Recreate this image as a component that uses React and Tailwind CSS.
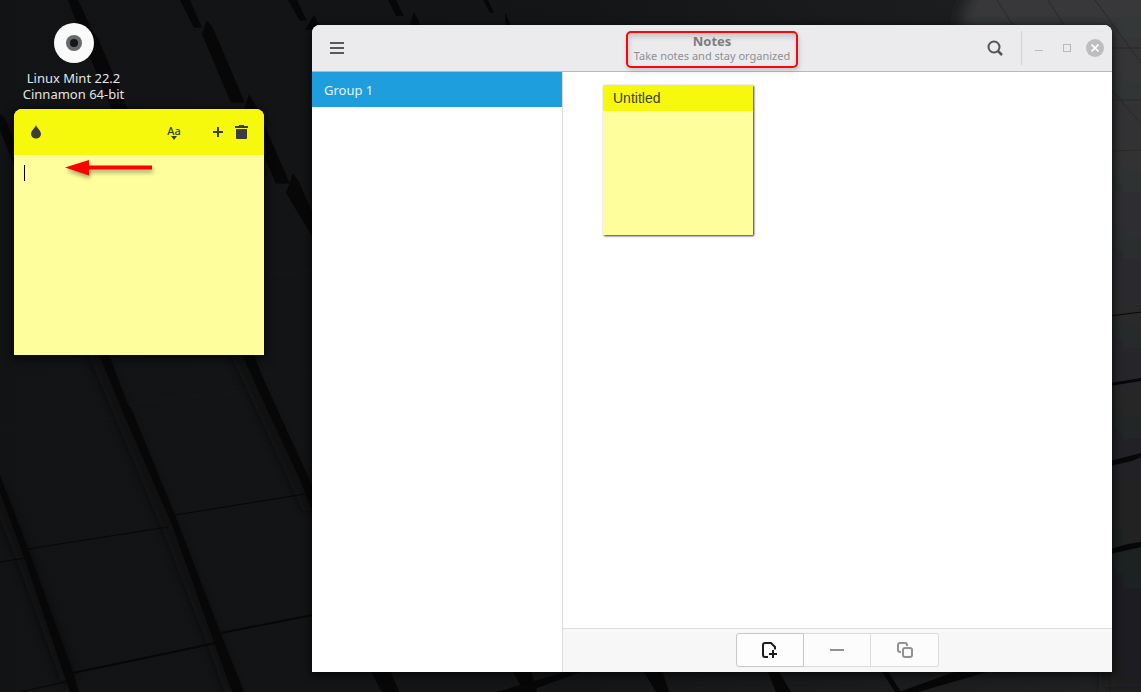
import React from "react";

function Wallpaper() {
  return (
    <svg
      aria-hidden="true"
      className="absolute inset-0 h-full w-full"
      viewBox="0 0 1141 692"
      preserveAspectRatio="xMidYMid slice"
    >
      <defs>
        <linearGradient id="base" x1="0" y1="0" x2="1" y2="0">
          <stop offset="0" stopColor="#121315" />
          <stop offset="0.5" stopColor="#141517" />
          <stop offset="1" stopColor="#202123" />
        </linearGradient>
        <linearGradient id="side" x1="0" y1="0" x2="0" y2="1">
          <stop offset="0" stopColor="#38393b" />
          <stop offset="0.4" stopColor="#2b2c2e" />
          <stop offset="0.75" stopColor="#202123" />
          <stop offset="1" stopColor="#1c1d1f" />
        </linearGradient>
        <filter id="soft" x="-20%" y="-20%" width="140%" height="140%">
          <feGaussianBlur stdDeviation="4" />
        </filter>
        <filter id="wide" x="-20%" y="-20%" width="140%" height="140%">
          <feGaussianBlur stdDeviation="7" />
        </filter>
      </defs>
      <rect width="1141" height="692" fill="url(#base)" />
      <path d="M984 -20C960 0 960 20 960 60H1105V692H1160V-20Z" fill="url(#side)" filter="url(#wide)" />

      <g fill="none" stroke="#0a0b0c" strokeWidth="14" opacity="0.6" filter="url(#soft)">
        <path d="M94 350L128 430L170 530L214 642L232 692" />
        <path d="M236 350L262 405L310 510" />
        <path d="M-4 490L24 560L68 680" />
      </g>
      <g fill="#070708">
        <path d="M68 0H78L92 30L98 38L127 107L135 120H116L85 45Z" />
        <path d="M180 0H190L202 28H194Z" />
        <path d="M207 20L213 28L245 103H231L202 34Z" />
        <path d="M249 94L257 108L290 184H276L244 109Z" />
        <path d="M293 173L299 182L330 254L312 236L286 193Z" />
        <path d="M288 0H297L307 21H300Z" />
        <path d="M314 15L322 30H305Z" />
        <path d="M388 0H396L404 16H396Z" />
        <path d="M414 12L422 28H409Z" />
        <path d="M483 0H488L494 13H490Z" />
        <path d="M505 12L512 28H506Z" />
        <path d="M0 114L5 118L14 140V165L0 130Z" />
        <path d="M97 350H107L128 405L131 408L175 515L220 632L244 692H232L215 645L172 525L124 415Z" />
        <path d="M240 350H252L263 378L330 525L312 510L300 480L258 390Z" />
        <path d="M-1 472L28 549L73 672L79 692H70L25 560L-1 490Z" />
        <path d="M370 670H390L399 692H382Z" />
        <path d="M512 670H531L537 692H524Z" />
        <path d="M496 692L572 670H586L526 692Z" />
        <path d="M643 670H662L669 692H656Z" />
        <path d="M767 670H778L791 692H776Z" />
        <path d="M881 670H887L901 692H895Z" />
        <path d="M899 692L960 670H994L918 692Z" />
        <path d="M1110 383L1141 378V381L1110 386Z" />
        <path d="M1110 461L1141 453V457L1132 461L1110 466Z" />
        <path d="M1110 549L1128 544L1141 542V547L1124 551L1110 554Z" />
      </g>
      <g fill="none" stroke="#070708">
        <path d="M175 515L305 494M28 549L168 527M0 562L25 558M20 692L70 681" />
        <path d="M221 633L312 615M73 673L216 643" strokeWidth="2" />
        <path d="M1110 316L1141 312" />
      </g>
      <g fill="none" stroke="#18191b" opacity="0.6">
        <path d="M94 28H202M207 21H307M98 103H245M264 184H290M131 403L250 390M0 431L120 417M264 376L312 370M268 274L312 271" />
      </g>
      <g fill="none" stroke="#29292b">
        <path d="M997 0L1013 25M1048 0L1064 25M1095 0L1141 63M1112 48H1141M1112 100H1141M1112 151L1141 150M1112 90L1141 124" />
      </g>
    </svg>
  );
}

function Disc() {
  return (
    <svg aria-hidden="true" className="h-10 w-10" viewBox="0 0 40 40">
      <circle cx="20" cy="20" r="20" fill="#fafafa" />
      <circle cx="20" cy="20" r="8" fill="#67686b" />
      <circle cx="20" cy="20" r="4" fill="#15161a" />
    </svg>
  );
}

function StickyNote() {
  return (
    <section
      aria-label="Sticky note"
      className="w-[250px] overflow-hidden rounded-t-lg bg-[#feff9c] text-[#3c3c3c] shadow-[0_2px_8px_2px_rgba(0,0,0,0.6)]"
    >
      <header className="flex h-[46px] items-center bg-[#f6f90b] px-[10px]">
        <button type="button" aria-label="Colour" className="flex h-6 w-6 items-center justify-center">
          <svg className="h-4 w-4" viewBox="0 0 16 16" fill="currentColor">
            <path d="M8 1C7.400 3.500 3 6.500 3 10a5 4.500 0 0 0 10 0C13 6.500 8.600 3.500 8 1Z" />
          </svg>
        </button>
        <button
          type="button"
          aria-label="Format"
          className="ml-auto mr-5 flex h-6 w-6 flex-col items-center justify-center text-[11px] leading-[11px] font-medium"
        >
          Aa
          <svg className="h-[4px] w-[6px]" viewBox="0 0 6 4" fill="currentColor">
            <path d="M0 0H6L3 4Z" />
          </svg>
        </button>
        <button type="button" aria-label="New note" className="flex h-6 w-6 items-center justify-center">
          <svg className="h-[10px] w-[10px]" viewBox="0 0 10 10" fill="currentColor">
            <path d="M4 0H6V4H10V6H6V10H4V6H0V4H4Z" />
          </svg>
        </button>
        <button type="button" aria-label="Delete note" className="flex h-6 w-6 items-center justify-center">
          <svg className="h-[14px] w-[14px]" viewBox="0 0 14 14" fill="currentColor">
            <path d="M4 0H9V1H13V3H0V1H4ZM1 4H12V13Q12 14 11 14H2Q1 14 1 13Z" />
          </svg>
        </button>
      </header>
      <div className="relative h-[200px]">
        <textarea
          aria-label="Note text"
          className="block h-full w-full resize-none bg-transparent p-[10px] text-sm outline-none"
        />
        <span aria-hidden="true" className="absolute top-[10px] left-[10px] h-4 w-px bg-black" />
        <svg
          aria-hidden="true"
          className="absolute top-[4px] left-[50px] h-5 w-[90px] overflow-visible drop-shadow-[1px_3px_2px_rgba(0,0,0,0.35)]"
          viewBox="0 0 90 20"
        >
          <path d="M1 8.500L25 1V6.500H88V10.500H25V16.500Z" fill="#fe0000" />
        </svg>
      </div>
    </section>
  );
}

function HeaderBar() {
  return (
    <header className="grid h-[47px] shrink-0 grid-cols-[1fr_auto_1fr] items-center rounded-t-lg border-b border-[#b9b9bb] bg-[#ebebed]">
      <button type="button" aria-label="Menu" className="ml-[13px] flex h-6 w-6 items-center justify-center">
        <svg className="h-3 w-[14px]" viewBox="0 0 14 12" fill="#5b5859">
          <path d="M0 0H14V2H0ZM0 5H14V7H0ZM0 10H14V12H0Z" />
        </svg>
      </button>
      <div className="relative text-center text-[#8f8f93]">
        <h1 className="text-[13px] leading-[15px] font-bold text-[#7d7d7d]">Notes</h1>
        <p className="text-[11px] leading-[14px]">Take notes and stay organized</p>
        <div
          aria-hidden="true"
          className="pointer-events-none absolute -inset-x-[8px] -top-[3px] -bottom-[5px] rounded-[5px] border-2 border-[#fa0509] shadow-[1px_3px_5px_rgba(0,0,0,0.15),inset_1px_4px_5px_rgba(0,0,0,0.15)]"
        />
      </div>
      <div className="flex items-center justify-end pr-2">
        <button type="button" aria-label="Search" className="mr-[14px] flex h-6 w-6 items-center justify-center">
          <svg className="h-4 w-4" viewBox="0 0 16 16" fill="none" stroke="#555354" strokeWidth="2">
            <circle cx="7" cy="7" r="5.500" />
            <path d="M11 11L15 15" strokeWidth="2.500" />
          </svg>
        </button>
        <span className="mr-[5px] h-[34px] w-px bg-[#d3d3d5]" />
        <button type="button" aria-label="Minimize" className="mr-1 flex h-6 w-6 items-center justify-center">
          <svg className="h-2 w-2" viewBox="0 0 8 8" fill="#b8b8ba">
            <path d="M0 6H8V7H0Z" />
          </svg>
        </button>
        <button type="button" aria-label="Maximize" className="mr-[7px] flex h-6 w-6 items-center justify-center">
          <span className="h-2 w-2 border border-[#b8b8ba]" />
        </button>
        <button
          type="button"
          aria-label="Close"
          className="flex h-[18px] w-[18px] items-center justify-center rounded-full bg-[#bdbdbf]"
        >
          <svg className="h-2 w-2" viewBox="0 0 8 8" stroke="#fff" strokeWidth="1.600">
            <path d="M0.500 0.500L7.500 7.500M7.500 0.500L0.500 7.500" />
          </svg>
        </button>
      </div>
    </header>
  );
}

function NotesWindow() {
  return (
    <main className="mt-[25px] mr-[29px] mb-5 flex min-w-0 flex-1 flex-col rounded-t-lg bg-white shadow-[0_2px_8px_2px_rgba(0,0,0,0.6)]">
      <HeaderBar />
      <div className="flex min-h-0 flex-1">
        <nav className="w-[251px] shrink-0 border-r border-[#dcdcde]">
          <a href="#group-1" className="flex h-[35px] items-center bg-[#1f9ede] px-3 text-[13px] leading-4 text-[#e3f2fb]">
            Group 1
          </a>
        </nav>
        <div className="flex min-w-0 flex-1 flex-col">
          <div className="flex flex-1 flex-wrap items-start px-10 pt-[13px]">
            <article className="h-[150px] w-[150px] bg-[#feff9c] shadow-[1px_1px_2px_rgba(0,0,0,0.8)]">
              <h2 className="h-[26px] bg-[#f6f90b] px-[10px] font-['Liberation_Sans',Arial,sans-serif] text-sm leading-[26px] text-[#40402c]">
                Untitled
              </h2>
            </article>
          </div>
          <footer className="flex h-11 items-start justify-center border-t border-[#dcdcde] bg-[#f7f7f7] pt-1">
            <div className="flex h-[34px]">
              <button
                type="button"
                aria-label="Add note"
                className="flex w-[68px] items-center justify-center rounded-l-[3px] border border-[#c8c8cc] bg-[#fdfdfd]"
              >
                <svg className="h-4 w-4" viewBox="0 0 16 16" fill="none" stroke="#1c1c1c" strokeWidth="2">
                  <path d="M6 15H3Q1 15 1 13V3Q1 1 3 1H9L13 5V7.500" />
                  <path d="M11 8V16M7 12H15" />
                </svg>
              </button>
              <button
                type="button"
                aria-label="Remove note"
                className="flex w-[67px] items-center justify-center border-y border-r border-[#dcdcde] bg-[#fcfcfc]"
              >
                <svg className="h-[2px] w-[14px]" viewBox="0 0 14 2" fill="#929292">
                  <path d="M0 0H14V2H0Z" />
                </svg>
              </button>
              <button
                type="button"
                aria-label="Duplicate note"
                className="flex w-[68px] items-center justify-center rounded-r-[3px] border-y border-r border-[#dcdcde] bg-[#fcfcfc]"
              >
                <svg className="h-4 w-4" viewBox="0 0 16 16" fill="none" stroke="#929292" strokeWidth="2">
                  <rect x="6" y="6" width="9" height="9" rx="2" />
                  <path d="M4 10H3Q1 10 1 8V3Q1 1 3 1H8Q10 1 10 3V4" />
                </svg>
              </button>
            </div>
          </footer>
        </div>
      </div>
    </main>
  );
}

export default function App() {
  return (
    <div className="relative min-h-screen overflow-hidden bg-[#131416] font-['Noto_Sans','Open_Sans',sans-serif]">
      <Wallpaper />
      <div className="relative flex min-h-screen">
        <div className="mr-12 ml-[14px] w-[250px] shrink-0 pt-[23px]">
          <a href="#disc" className="mb-[7px] flex w-[119px] flex-col items-center gap-[7px] text-center text-[13px] leading-4 text-[#e4e4e4]">
            <Disc />
            <span>
              Linux Mint 22.2
              <br />
              Cinnamon 64-bit
            </span>
          </a>
          <StickyNote />
        </div>
        <NotesWindow />
      </div>
    </div>
  );
}
